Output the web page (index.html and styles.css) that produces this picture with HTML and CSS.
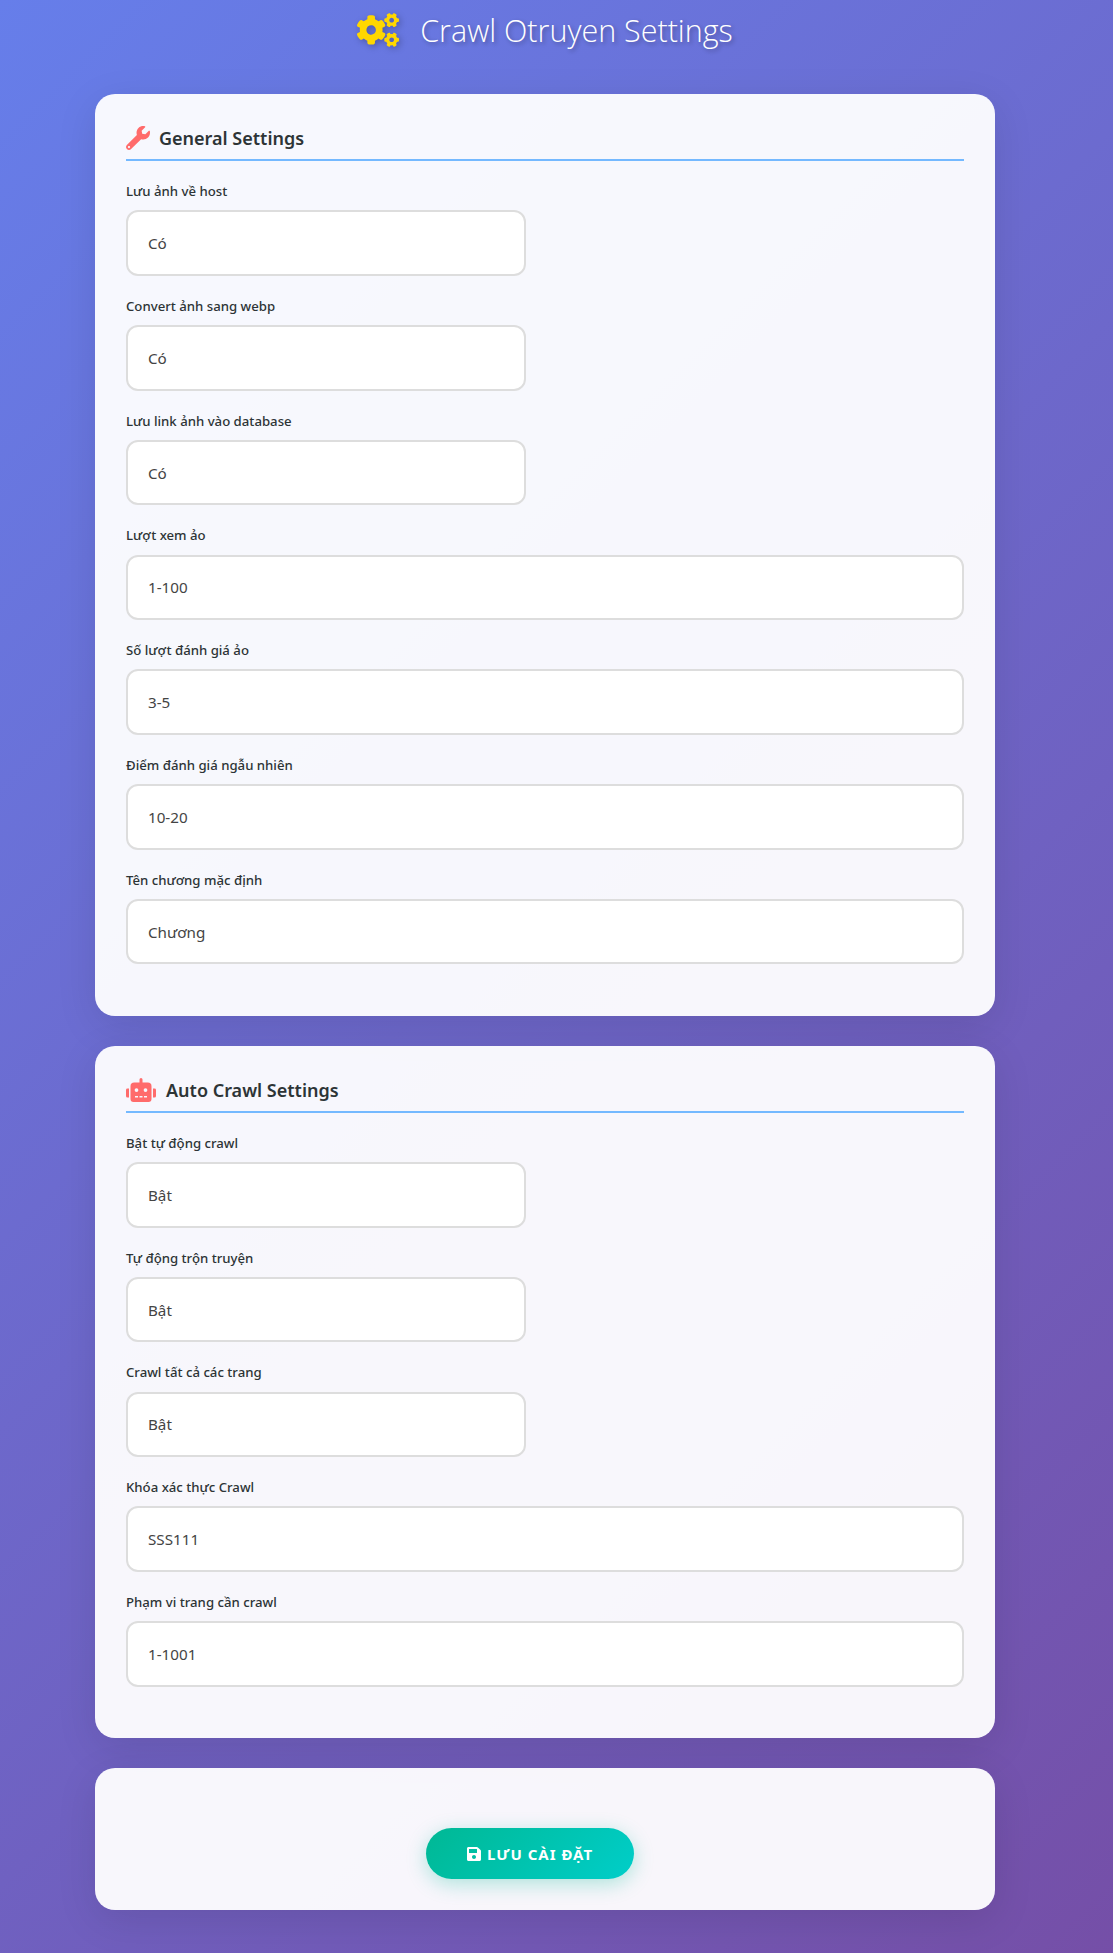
FILE: index.html
```html
<!DOCTYPE html>
<html lang="vi">

<head>
    <meta charset="UTF-8">
    <title>Crawl Otruyen Settings</title>
    <link rel="stylesheet" href="styles.css">
</head>

<body>
    <div class="wrap">

        <h1 class="page_title">
            <svg class="icon_cogs" viewBox="0 0 640 512"><path d="M512.1 191l-8.2 14.3c-3 5.3-9.4 7.5-15.1 5.4-11.8-4.4-22.6-10.7-32.1-18.6-4.6-3.8-5.8-10.5-2.8-15.7l8.2-14.3c-6.9-8-12.3-17.3-15.9-27.4h-16.5c-6 0-11.2-4.3-12.2-10.3-2-12-2.1-24.6 0-37.1 1-6 6.2-10.4 12.2-10.4h16.5c3.6-10.1 9-19.4 15.9-27.4l-8.2-14.3c-3-5.2-1.9-11.9 2.8-15.7 9.5-7.9 20.4-14.2 32.1-18.6 5.7-2.1 12.1.1 15.1 5.4l8.2 14.3c10.5-1.9 21.2-1.9 31.7 0L552 6.3c3-5.3 9.4-7.5 15.1-5.4 11.8 4.4 22.6 10.7 32.1 18.6 4.6 3.8 5.8 10.5 2.8 15.7l-8.2 14.3c6.9 8 12.3 17.3 15.9 27.4h16.5c6 0 11.2 4.3 12.2 10.3 2 12 2.1 24.6 0 37.1-1 6-6.2 10.4-12.2 10.4h-16.5c-3.6 10.1-9 19.4-15.9 27.4l8.2 14.3c3 5.2 1.9 11.9-2.8 15.7-9.5 7.9-20.4 14.2-32.1 18.6-5.7 2.1-12.1-.1-15.1-5.4l-8.2-14.3c-10.4 1.9-21.2 1.9-31.7 0zm-10.5-58.8c38.5 29.6 82.4-14.3 52.8-52.8-38.5-29.7-82.4 14.3-52.8 52.8zM386.3 286.1l33.7 16.8c10.1 5.8 14.5 18.1 10.5 29.1-8.9 24.2-26.4 46.4-42.6 65.8-7.4 8.9-20.2 11.1-30.3 5.3l-29.1-16.8c-16 13.7-34.6 24.6-54.9 31.7v33.6c0 11.6-8.3 21.6-19.7 23.6-24.6 4.2-50.4 4.4-75.9 0-11.5-2-20-11.9-20-23.6V418c-20.3-7.2-38.9-18-54.9-31.7L74 403c-10 5.8-22.9 3.6-30.3-5.3-16.2-19.4-33.3-41.6-42.2-65.7-4-10.9.4-23.2 10.5-29.1l33.3-16.8c-3.9-20.9-3.9-42.4 0-63.4L12 205.8c-10.1-5.8-14.6-18.1-10.5-29 8.9-24.2 26-46.4 42.2-65.8 7.4-8.9 20.2-11.1 30.3-5.3l29.1 16.8c16-13.7 34.6-24.6 54.9-31.7V57.1c0-11.5 8.2-21.5 19.6-23.5 24.6-4.2 50.5-4.4 76-.1 11.5 2 20 11.9 20 23.6v33.6c20.3 7.2 38.9 18 54.9 31.7l29.1-16.8c10-5.8 22.9-3.6 30.3 5.3 16.2 19.4 33.2 41.6 42.1 65.8 4 10.9.1 23.2-10 29.1l-33.7 16.8c3.9 21 3.9 42.5 0 63.5zm-117.6 21.1c59.2-77-28.7-164.9-105.7-105.7-59.2 77 28.7 164.9 105.7 105.7zm243.4 182.7l-8.2 14.3c-3 5.3-9.4 7.5-15.1 5.4-11.8-4.4-22.6-10.7-32.1-18.6-4.6-3.8-5.8-10.5-2.8-15.7l8.2-14.3c-6.9-8-12.3-17.3-15.9-27.4h-16.5c-6 0-11.2-4.3-12.2-10.3-2-12-2.1-24.6 0-37.1 1-6 6.2-10.4 12.2-10.4h16.5c3.6-10.1 9-19.4 15.9-27.4l-8.2-14.3c-3-5.2-1.9-11.9 2.8-15.7 9.5-7.9 20.4-14.2 32.1-18.6 5.7-2.1 12.1.1 15.1 5.4l8.2 14.3c10.5-1.9 21.2-1.9 31.7 0l8.2-14.3c3-5.3 9.4-7.5 15.1-5.4 11.8 4.4 22.6 10.7 32.1 18.6 4.6 3.8 5.8 10.5 2.8 15.7l-8.2 14.3c6.9 8 12.3 17.3 15.9 27.4h16.5c6 0 11.2 4.3 12.2 10.3 2 12 2.1 24.6 0 37.1-1 6-6.2 10.4-12.2 10.4h-16.5c-3.6 10.1-9 19.4-15.9 27.4l8.2 14.3c3 5.2 1.9 11.9-2.8 15.7-9.5 7.9-20.4 14.2-32.1 18.6-5.7 2.1-12.1-.1-15.1-5.4l-8.2-14.3c-10.4 1.9-21.2 1.9-31.7 0zM501.6 431c38.5 29.6 82.4-14.3 52.8-52.8-38.5-29.6-82.4 14.3-52.8 52.8z"/></svg>
            <span>Crawl Otruyen Settings</span>
        </h1>

        <form>
            <section class="card">
                <h2 class="card_title">
                    <svg class="icon_wrench" viewBox="0 0 512 512"><path d="M507.73 109.1c-2.24-9.03-13.54-12.09-20.12-5.51l-74.36 74.36-67.88-11.31-11.31-67.88 74.36-74.36c6.62-6.62 3.43-17.9-5.66-20.16-47.38-11.74-99.55.91-136.58 37.93-39.64 39.64-50.55 97.1-34.05 147.2L18.74 402.76c-24.99 24.99-24.99 65.51 0 90.5 24.99 24.99 65.51 24.99 90.5 0l213.21-213.21c50.12 16.71 107.47 5.68 147.37-34.22 37.07-37.07 49.7-89.32 37.91-136.73zM64 472c-13.25 0-24-10.75-24-24 0-13.26 10.75-24 24-24s24 10.74 24 24c0 13.25-10.75 24-24 24z"/></svg>
                    General Settings
                </h2>

                <div class="field">
                    <label for="save_host">Lưu ảnh về host</label>
                    <select class="short" id="save_host"><option>Có</option><option>Không</option></select>
                </div>
                <div class="field">
                    <label for="to_webp">Convert ảnh sang webp</label>
                    <select class="short" id="to_webp"><option>Có</option><option>Không</option></select>
                </div>
                <div class="field">
                    <label for="save_link">Lưu link ảnh vào database</label>
                    <select class="short" id="save_link"><option>Có</option><option>Không</option></select>
                </div>
                <div class="field">
                    <label for="fake_views">Lượt xem ảo</label>
                    <input type="text" id="fake_views" value="1-100">
                </div>
                <div class="field">
                    <label for="fake_votes">Số lượt đánh giá ảo</label>
                    <input type="text" id="fake_votes" value="3-5">
                </div>
                <div class="field">
                    <label for="random_score">Điểm đánh giá ngẫu nhiên</label>
                    <input type="text" id="random_score" value="10-20">
                </div>
                <div class="field">
                    <label for="chapter_name">Tên chương mặc định</label>
                    <input type="text" id="chapter_name" value="Chương">
                </div>
            </section>

            <section class="card">
                <h2 class="card_title">
                    <svg class="icon_robot" viewBox="0 0 640 512"><path d="M32,224H64V416H32A31.96166,31.96166,0,0,1,0,384V256A31.96166,31.96166,0,0,1,32,224Zm512-48V448a64.06328,64.06328,0,0,1-64,64H160a64.06328,64.06328,0,0,1-64-64V176a79.974,79.974,0,0,1,80-80H288V32a32,32,0,0,1,64,0V96H464A79.974,79.974,0,0,1,544,176ZM264,256a40,40,0,1,0-40,40A39.997,39.997,0,0,0,264,256Zm-8,128H192v32h64Zm96,0H288v32h64ZM456,256a40,40,0,1,0-40,40A39.997,39.997,0,0,0,456,256Zm-8,128H384v32h64ZM640,256V384a31.96166,31.96166,0,0,1-32,32H576V224h32A31.96166,31.96166,0,0,1,640,256Z"/></svg>
                    Auto Crawl Settings
                </h2>

                <div class="field">
                    <label for="auto_crawl">Bật tự động crawl</label>
                    <select class="short" id="auto_crawl"><option>Bật</option><option>Tắt</option></select>
                </div>
                <div class="field">
                    <label for="auto_mix">Tự động trộn truyện</label>
                    <select class="short" id="auto_mix"><option>Bật</option><option>Tắt</option></select>
                </div>
                <div class="field">
                    <label for="crawl_all">Crawl tất cả các trang</label>
                    <select class="short" id="crawl_all"><option>Bật</option><option>Tắt</option></select>
                </div>
                <div class="field">
                    <label for="crawl_key">Khóa xác thực Crawl</label>
                    <input type="text" id="crawl_key" value="SSS111">
                </div>
                <div class="field">
                    <label for="page_range">Phạm vi trang cần crawl</label>
                    <input type="text" id="page_range" value="1-1001">
                </div>
            </section>

            <section class="card card_submit">
                <button type="button" class="btn_save">
                    <svg class="icon_save" viewBox="0 0 448 512"><path d="M433.941 129.941l-83.882-83.882A48 48 0 0 0 316.118 32H48C21.49 32 0 53.49 0 80v352c0 26.51 21.49 48 48 48h352c26.51 0 48-21.49 48-48V163.882a48 48 0 0 0-14.059-33.941zM224 416c-35.346 0-64-28.654-64-64 0-35.346 28.654-64 64-64s64 28.654 64 64c0 35.346-28.654 64-64 64zm96-304.52V212c0 6.627-5.373 12-12 12H76c-6.627 0-12-5.373-12-12V108c0-6.627 5.373-12 12-12h228.52c3.183 0 6.235 1.264 8.485 3.515l3.48 3.48A11.996 11.996 0 0 1 320 111.48z"/></svg>
                    LƯU CÀI ĐẶT
                </button>
            </section>
        </form>

    </div>
</body>

</html>
```

FILE: styles.css
```css
* {
    box-sizing: border-box;
}

body {
    margin: 0;
    background: linear-gradient(135deg, #667eea 0%, #764ba2 108%);
    font-family: "Noto Sans", "Open Sans", sans-serif;
    color: #2d3436;
}

.wrap {
    width: 900px;
    margin-left: 95px;
    padding-bottom: 43.4px;
}

.page_title {
    display: flex;
    align-items: center;
    justify-content: center;
    gap: 21px;
    height: 60px;
    margin: 0 0 34px;
    color: white;
    font-family: "Open Sans", "Noto Sans", sans-serif;
    font-size: 30.5px;
    font-weight: 300;
    text-shadow: 2px 2px 4px rgba(0, 0, 0, 0.3);
}

.icon_cogs {
    width: 42px;
    height: 34px;
    fill: #ffd700;
    filter: drop-shadow(2px 2px 3px rgba(0, 0, 0, 0.25));
}

.card {
    margin-bottom: 30px;
    padding: 31px 31px 31.4px;
    background: rgba(255, 255, 255, 0.95);
    border-radius: 20px;
    box-shadow: 0 10px 40px rgba(0, 0, 0, 0.1);
}

.card_title {
    display: flex;
    align-items: center;
    gap: 9px;
    height: 36px;
    margin: 0 0 20px;
    padding-bottom: 8px;
    border-bottom: 2px solid #74b9ff;
    font-size: 18px;
    font-weight: 600;
}

.icon_wrench {
    width: 24px;
    height: 24px;
    fill: #ff6b6b;
}

.icon_robot {
    width: 30px;
    height: 24px;
    margin-right: 1px;
    fill: #ff6b6b;
}

.field {
    margin-bottom: 20px;
}

.field label {
    display: block;
    height: 22px;
    margin-bottom: 7.2px;
    font-size: 13.2px;
    font-weight: 500;
    line-height: 21px;
}

.field input,
.field select {
    display: block;
    width: 100%;
    height: 65.6px;
    padding: 0 20px;
    background: white;
    border: 2px solid #ddd;
    border-radius: 12px;
    color: #444;
    font-family: inherit;
    font-size: 15.2px;
    appearance: none;
}

.field select.short {
    width: 400px;
}

.card_submit {
    margin-bottom: 0;
    padding-top: 60px;
    padding-bottom: 30.6px;
    text-align: center;
}

.btn_save {
    display: inline-flex;
    align-items: center;
    justify-content: center;
    gap: 6px;
    width: 208px;
    height: 51px;
    margin-right: 30px;
    background: linear-gradient(135deg, #00b894, #00cec9);
    border: 0;
    border-radius: 50px;
    box-shadow: 0 5px 20px rgba(0, 184, 148, 0.3);
    color: white;
    font-family: inherit;
    font-size: 15px;
    font-weight: 700;
    letter-spacing: 1px;
}

.icon_save {
    width: 14px;
    height: 16px;
    fill: white;
}
```
